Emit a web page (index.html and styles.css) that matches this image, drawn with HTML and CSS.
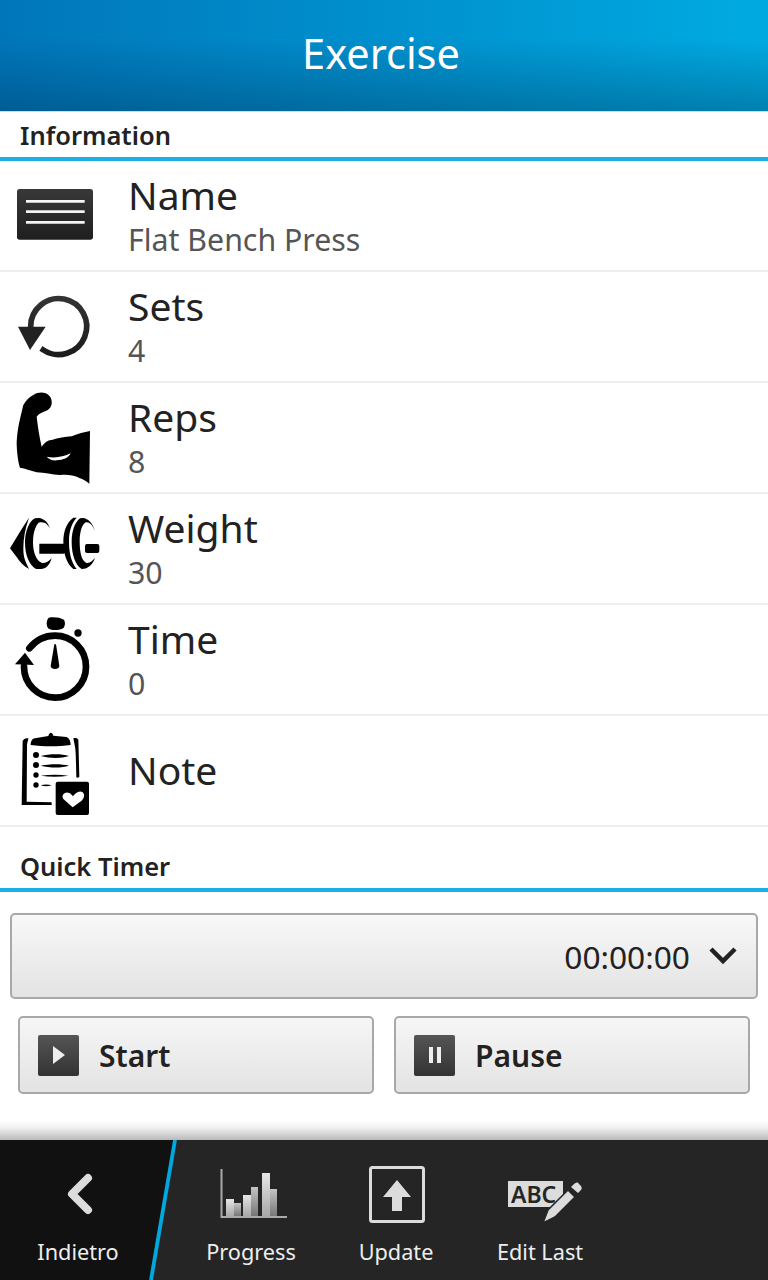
FILE: index.html
```html
<!DOCTYPE html>
<html lang="en">
<head>
    <meta charset="UTF-8">
    <meta name="viewport" content="width=device-width, initial-scale=1.0">
    <title>Exercise</title>
    <link rel="stylesheet" href="styles.css">
</head>
<body>
    <div class="screen">
        <header class="title-bar">Exercise</header>

        <div class="section-head info-head">Information</div>

        <!-- row icons share a 384x333 viewBox, three units to a pixel -->
        <div class="row">
            <svg class="row-icon" viewBox="0 0 384 333">
                <defs><linearGradient id="nameBg" x1="0" y1="0" x2="0" y2="1"><stop offset="0" stop-color="#383838"/><stop offset="1" stop-color="#1f1f1f"/></linearGradient></defs>
                <rect x="51" y="87" width="228" height="152" rx="8" fill="url(#nameBg)"/>
                <path d="M78 124H254M78 155H254M78 187H254" stroke="#f4f4f4" stroke-width="8"/>
            </svg>
            <div class="row-text"><div class="row-label">Name</div><div class="row-value">Flat Bench Press</div></div>
        </div>
        <div class="row">
            <svg class="row-icon" viewBox="0 0 384 333">
                <defs><linearGradient id="setsBg" x1="0" y1="0" x2="0" y2="1"><stop offset="0" stop-color="#333"/><stop offset="1" stop-color="#1c1c1c"/></linearGradient></defs>
                <path d="M92 167A84 84 0 1 1 130 237" fill="none" stroke="url(#setsBg)" stroke-width="17" stroke-linecap="square"/>
                <path d="M54 167H137L90 237Z" fill="#222"/>
            </svg>
            <div class="row-text"><div class="row-label">Sets</div><div class="row-value">4</div></div>
        </div>
        <div class="row">
            <svg class="row-icon" viewBox="0 0 384 333">
                <path d="M100 39C112 31 125 30 135 33C150 38 157 52 155 65C153 78 145 83 135 88C126 92 118 94 110 104C113 130 118 165 125 194C135 180 145 173 155 174C175 168 195 165 215 163C235 155 252 150 270 147L268 305C258 298 248 291 240 289C220 278 200 278 180 279C155 278 135 272 110 271C92 265 75 260 60 257C54 240 50 205 50 180C52 140 60 110 70 69C78 55 88 45 100 39Z" fill="#000"/>
                <path d="M140 224C160 229 190 226 212 214C205 228 190 234 170 235C157 236 147 232 140 224Z" fill="#fff"/>
            </svg>
            <div class="row-text"><div class="row-label">Reps</div><div class="row-value">8</div></div>
        </div>
        <div class="row">
            <svg class="row-icon" viewBox="0 0 384 333">
                <path d="M30 166L60 116L87 74C76 105 70 135 70 166C70 195 76 205 87 228C72 220 60 208 50 192Z" fill="#000"/>
                <path d="M105 76C88 84 75 115 75 148C75 188 88 216 108 228H125C140 227 150 213 155 196C146 205 137 212 125 209C110 204 99 180 99 148C99 115 110 90 120 88C135 86 145 95 150 108C147 92 135 78 118 75Z" fill="#000"/>
                <path d="M118 152H192C196 152 200 158 200 166C200 176 196 182 190 182H118Z" fill="#000"/>
                <path d="M220 74C200 88 190 115 190 146C190 180 200 212 220 228H230C214 208 207 180 207 146C207 115 214 92 230 74Z" fill="#000"/>
                <path d="M240 76C224 88 215 115 215 146C215 185 226 216 245 228C265 228 280 212 285 194C277 205 268 212 258 209C245 202 239 178 239 146C239 115 247 92 258 88C270 86 280 100 285 116C280 92 265 76 248 75Z" fill="#000"/>
                <rect x="255" y="153" width="43" height="27" rx="6" fill="#000"/>
            </svg>
            <div class="row-text"><div class="row-label">Weight</div><div class="row-value">30</div></div>
        </div>
        <div class="row">
            <svg class="row-icon" viewBox="0 0 384 333">
                <path d="M146 41C160 38 180 40 192 47C197 56 195 70 187 74C175 79 155 79 146 74C138 66 138 49 146 41Z" fill="#000"/>
                <circle cx="234" cy="87" r="11" fill="#000"/>
                <path d="M88 133C108 108 135 95 165 95C216 95 258 136 258 188C258 239 216 281 165 281C114 281 72 240 72 188" fill="none" stroke="#000" stroke-width="20" stroke-linecap="round"/>
                <path d="M45 181L75 146L102 183Z" fill="#000"/>
                <path d="M163 121H168L178 186C178 198 152 198 152 186Z" fill="#000"/>
            </svg>
            <div class="row-text"><div class="row-label">Time</div><div class="row-value">0</div></div>
        </div>
        <div class="row">
            <svg class="row-icon" viewBox="0 0 384 333">
                <path d="M92 90C93 78 96 71 105 70L145 63C147 56 150 53 152 53C156 53 158 56 160 62L200 66C208 70 212 78 212 90C175 95 130 95 92 90Z" fill="#000"/>
                <path d="M68 78C70 72 78 68 85 70C85 75 82 80 81 90L80 260L155 262V270H65Z" fill="#000"/>
                <path d="M220 70C226 68 233 70 235 74L238 185C236 188 232 189 229 187C228 150 228 110 225 95Z" fill="#000"/>
                <circle cx="108" cy="120" r="9" fill="#000"/><circle cx="108" cy="150" r="9" fill="#000"/><circle cx="108" cy="180" r="8" fill="#000"/><circle cx="108" cy="210" r="8" fill="#000"/>
                <path d="M122 123C150 116 185 116 207 123C185 131 150 131 122 123ZM122 152C150 146 185 146 207 152C185 159 150 159 122 152ZM122 182C150 178 180 178 205 182C180 186 150 186 122 182ZM122 211C132 208 145 208 155 211C145 215 132 215 122 211Z" fill="#000"/>
                <rect x="167" y="200" width="100" height="100" rx="6" fill="#000"/>
                <path d="M218 277L190 252C182 240 196 228 208 234C212 236 216 240 219 244C226 234 238 225 248 232C256 240 252 250 244 258Z" fill="#fff"/>
            </svg>
            <div class="row-text note-text"><div class="row-label">Note</div></div>
        </div>

        <div class="section-head timer-head">Quick Timer</div>

        <div class="timer-panel">
            <div class="dropdown">
                <span class="dropdown-value">00:00:00</span>
                <svg class="chevron" width="30" height="20" viewBox="0 0 30 20">
                    <path d="M3 3L15 15L27 3" fill="none" stroke="#222" stroke-width="4.500"/>
                </svg>
            </div>
            <div class="timer-buttons">
                <button class="timer-btn" type="button">
                    <span class="btn-icon"><svg width="14" height="20" viewBox="0 0 14 20"><path d="M1 1L13 10L1 19Z" fill="#eee"/></svg></span>
                    Start
                </button>
                <button class="timer-btn" type="button">
                    <span class="btn-icon"><svg width="14" height="16" viewBox="0 0 14 16"><path d="M1 0H5V16H1ZM9 0H13V16H9Z" fill="#eee"/></svg></span>
                    Pause
                </button>
            </div>
        </div>

        <footer class="action-bar">
            <!-- slanted blue divider lies over the two bar colours -->
            <svg class="slash" width="180" height="140" viewBox="0 0 180 140">
                <path d="M0 0H175L151 140H0Z" fill="#111"/>
                <path d="M175 0L151 140" stroke="#00a8df" stroke-width="3.800"/>
            </svg>
            <div class="action back">
                <svg width="30" height="42" viewBox="0 0 30 42"><path d="M23 5L7 21L23 37" fill="none" stroke="#dcdcdc" stroke-width="8" stroke-linecap="round" stroke-linejoin="round"/></svg>
                <span>Indietro</span>
            </div>
            <div class="action progress">
                <svg width="68" height="50" viewBox="0 0 68 50">
                    <defs><linearGradient id="barFill" x1="0" y1="0" x2="0" y2="1"><stop offset="0" stop-color="#e6e6e6"/><stop offset="1" stop-color="#a8a8a8"/></linearGradient>
                    <linearGradient id="barDark" x1="0" y1="0" x2="0" y2="1"><stop offset="0" stop-color="#c4c4c4"/><stop offset="1" stop-color="#777"/></linearGradient></defs>
                    <path d="M1.500 0V48H67" fill="none" stroke="#aaa" stroke-width="2"/>
                    <rect x="6" y="30" width="8" height="17" fill="url(#barFill)"/>
                    <rect x="14" y="34" width="7" height="13" fill="url(#barDark)"/>
                    <rect x="23" y="26" width="8" height="21" fill="url(#barFill)"/>
                    <rect x="31" y="18" width="7" height="29" fill="url(#barDark)"/>
                    <rect x="42" y="4" width="8" height="43" fill="url(#barFill)"/>
                    <rect x="50" y="20" width="7" height="27" fill="url(#barDark)"/>
                </svg>
                <span>Progress</span>
            </div>
            <div class="action update">
                <svg width="56" height="58" viewBox="0 0 56 58">
                    <rect x="1.500" y="1.500" width="53" height="54" rx="2" fill="none" stroke="#dcdcdc" stroke-width="3"/>
                    <path d="M28 14L42 31H33V45H23V31H14Z" fill="#dcdcdc"/>
                </svg>
                <span>Update</span>
            </div>
            <div class="action edit">
                <svg width="76" height="44" viewBox="0 0 76 44">
                    <rect x="0" y="1" width="55" height="26" fill="#dcdcdc"/>
                    <text x="3" y="23" class="abc">ABC</text>
                    <path d="M35 43L40 30L60 10L67 17L47 37Z" fill="#dcdcdc" stroke="#252525" stroke-width="1.500"/>
                    <path d="M63 7L66 4C68 2 70 2 71 4L73 6C74 8 74 9 72 11L70 13Z" fill="#dcdcdc"/>
                </svg>
                <span>Edit Last</span>
            </div>
        </footer>
    </div>
</body>
</html>
```

FILE: styles.css
```css
* {
    box-sizing: border-box;
}
html, body {
    margin: 0;
    padding: 0;
}
body {
    font-family: "Noto Sans", "Open Sans", sans-serif;
    background: #fff;
    color: #222;
}
.screen {
    position: relative;
    width: 768px;
    height: 1280px;
    overflow: hidden;
    display: flex;
    flex-direction: column;
    background: #fff;
}
.title-bar {
    height: 112px;
    padding: 0 6px 6px 0;
    display: flex;
    align-items: center;
    justify-content: center;
    color: #fff;
    font-size: 41.500px;
    background: linear-gradient(rgba(0, 40, 70, 0) 35%, rgba(0, 40, 70, 0.32) 100%), linear-gradient(90deg, #0076ba, #00abe2);
    border-bottom: 1px solid #d8d8d8;
}
.section-head {
    display: flex;
    align-items: center;
    padding-left: 20px;
    font-size: 25.500px;
    font-weight: 600;
    color: #222;
    border-bottom: 4px solid #1ab0e5;
}
.info-head {
    height: 49px;
}
.timer-head {
    height: 65px;
    padding-top: 17px;
}
.row {
    height: 111px;
    display: flex;
    align-items: center;
    border-bottom: 2px solid #eee;
}
.row-icon {
    width: 128px;
    height: 111px;
    flex-shrink: 0;
}
.row-text {
    display: flex;
    flex-direction: column;
    margin-top: 5px;
}
.row-label {
    font-size: 39px;
    line-height: 44px;
    color: #222;
}
.row-value {
    font-size: 30.300px;
    line-height: 46px;
    color: #555;
}
.note-text {
    margin-top: -1px;
}
.timer-panel {
    padding: 21px 10px 0;
}
.dropdown {
    height: 86px;
    display: flex;
    align-items: center;
    justify-content: flex-end;
    gap: 18px;
    padding-right: 18px;
    border: 2px solid #a8a8a8;
    border-radius: 5px;
    background: linear-gradient(#f8f8f8, #e3e3e3);
}
.dropdown-value {
    font-size: 31.700px;
    color: #222;
}
.timer-buttons {
    display: flex;
    gap: 20px;
    padding: 17px 8px 0;
}
.timer-btn {
    width: 356px;
    height: 78px;
    display: flex;
    align-items: center;
    gap: 20px;
    padding: 0 18px;
    border: 2px solid #a8a8a8;
    border-radius: 5px;
    background: linear-gradient(#f6f6f6, #e3e3e3);
    font-family: inherit;
    font-size: 30px;
    font-weight: 600;
    color: #222;
}
.btn-icon {
    width: 41px;
    height: 41px;
    display: flex;
    align-items: center;
    justify-content: center;
    border-radius: 2px;
    background: linear-gradient(#555, #333);
}
.action-bar {
    position: absolute;
    left: 0;
    right: 0;
    bottom: 0;
    height: 140px;
    background: #252525;
}
.action-bar::before {
    content: "";
    position: absolute;
    left: 0;
    right: 0;
    top: -20px;
    height: 20px;
    background: linear-gradient(rgba(0, 0, 0, 0), rgba(0, 0, 0, 0.06) 40%, rgba(0, 0, 0, 0.27));
}
.slash {
    position: absolute;
    left: 0;
    top: 0;
}
.action {
    position: absolute;
    top: 0;
    height: 140px;
    display: flex;
    flex-direction: column;
    align-items: center;
    color: #eee;
    font-size: 21.700px;
    transform: translateX(-50%);
}
.action svg {
    position: absolute;
    left: 50%;
    transform: translateX(-50%);
}
.action span {
    position: absolute;
    top: 97px;
    line-height: 30px;
    white-space: nowrap;
}
.back {
    left: 78px;
}
.back svg {
    top: 33px;
    left: 2px;
}
.progress {
    left: 251px;
}
.progress svg {
    top: 29px;
    left: 3px;
}
.update {
    left: 396px;
}
.update svg {
    top: 26px;
    left: 1px;
}
.edit {
    left: 540px;
}
.edit svg {
    top: 40px;
    left: 6px;
}
.abc {
    font-family: "Noto Sans", sans-serif;
    font-size: 23px;
    font-weight: 600;
    fill: #252525;
}
```
